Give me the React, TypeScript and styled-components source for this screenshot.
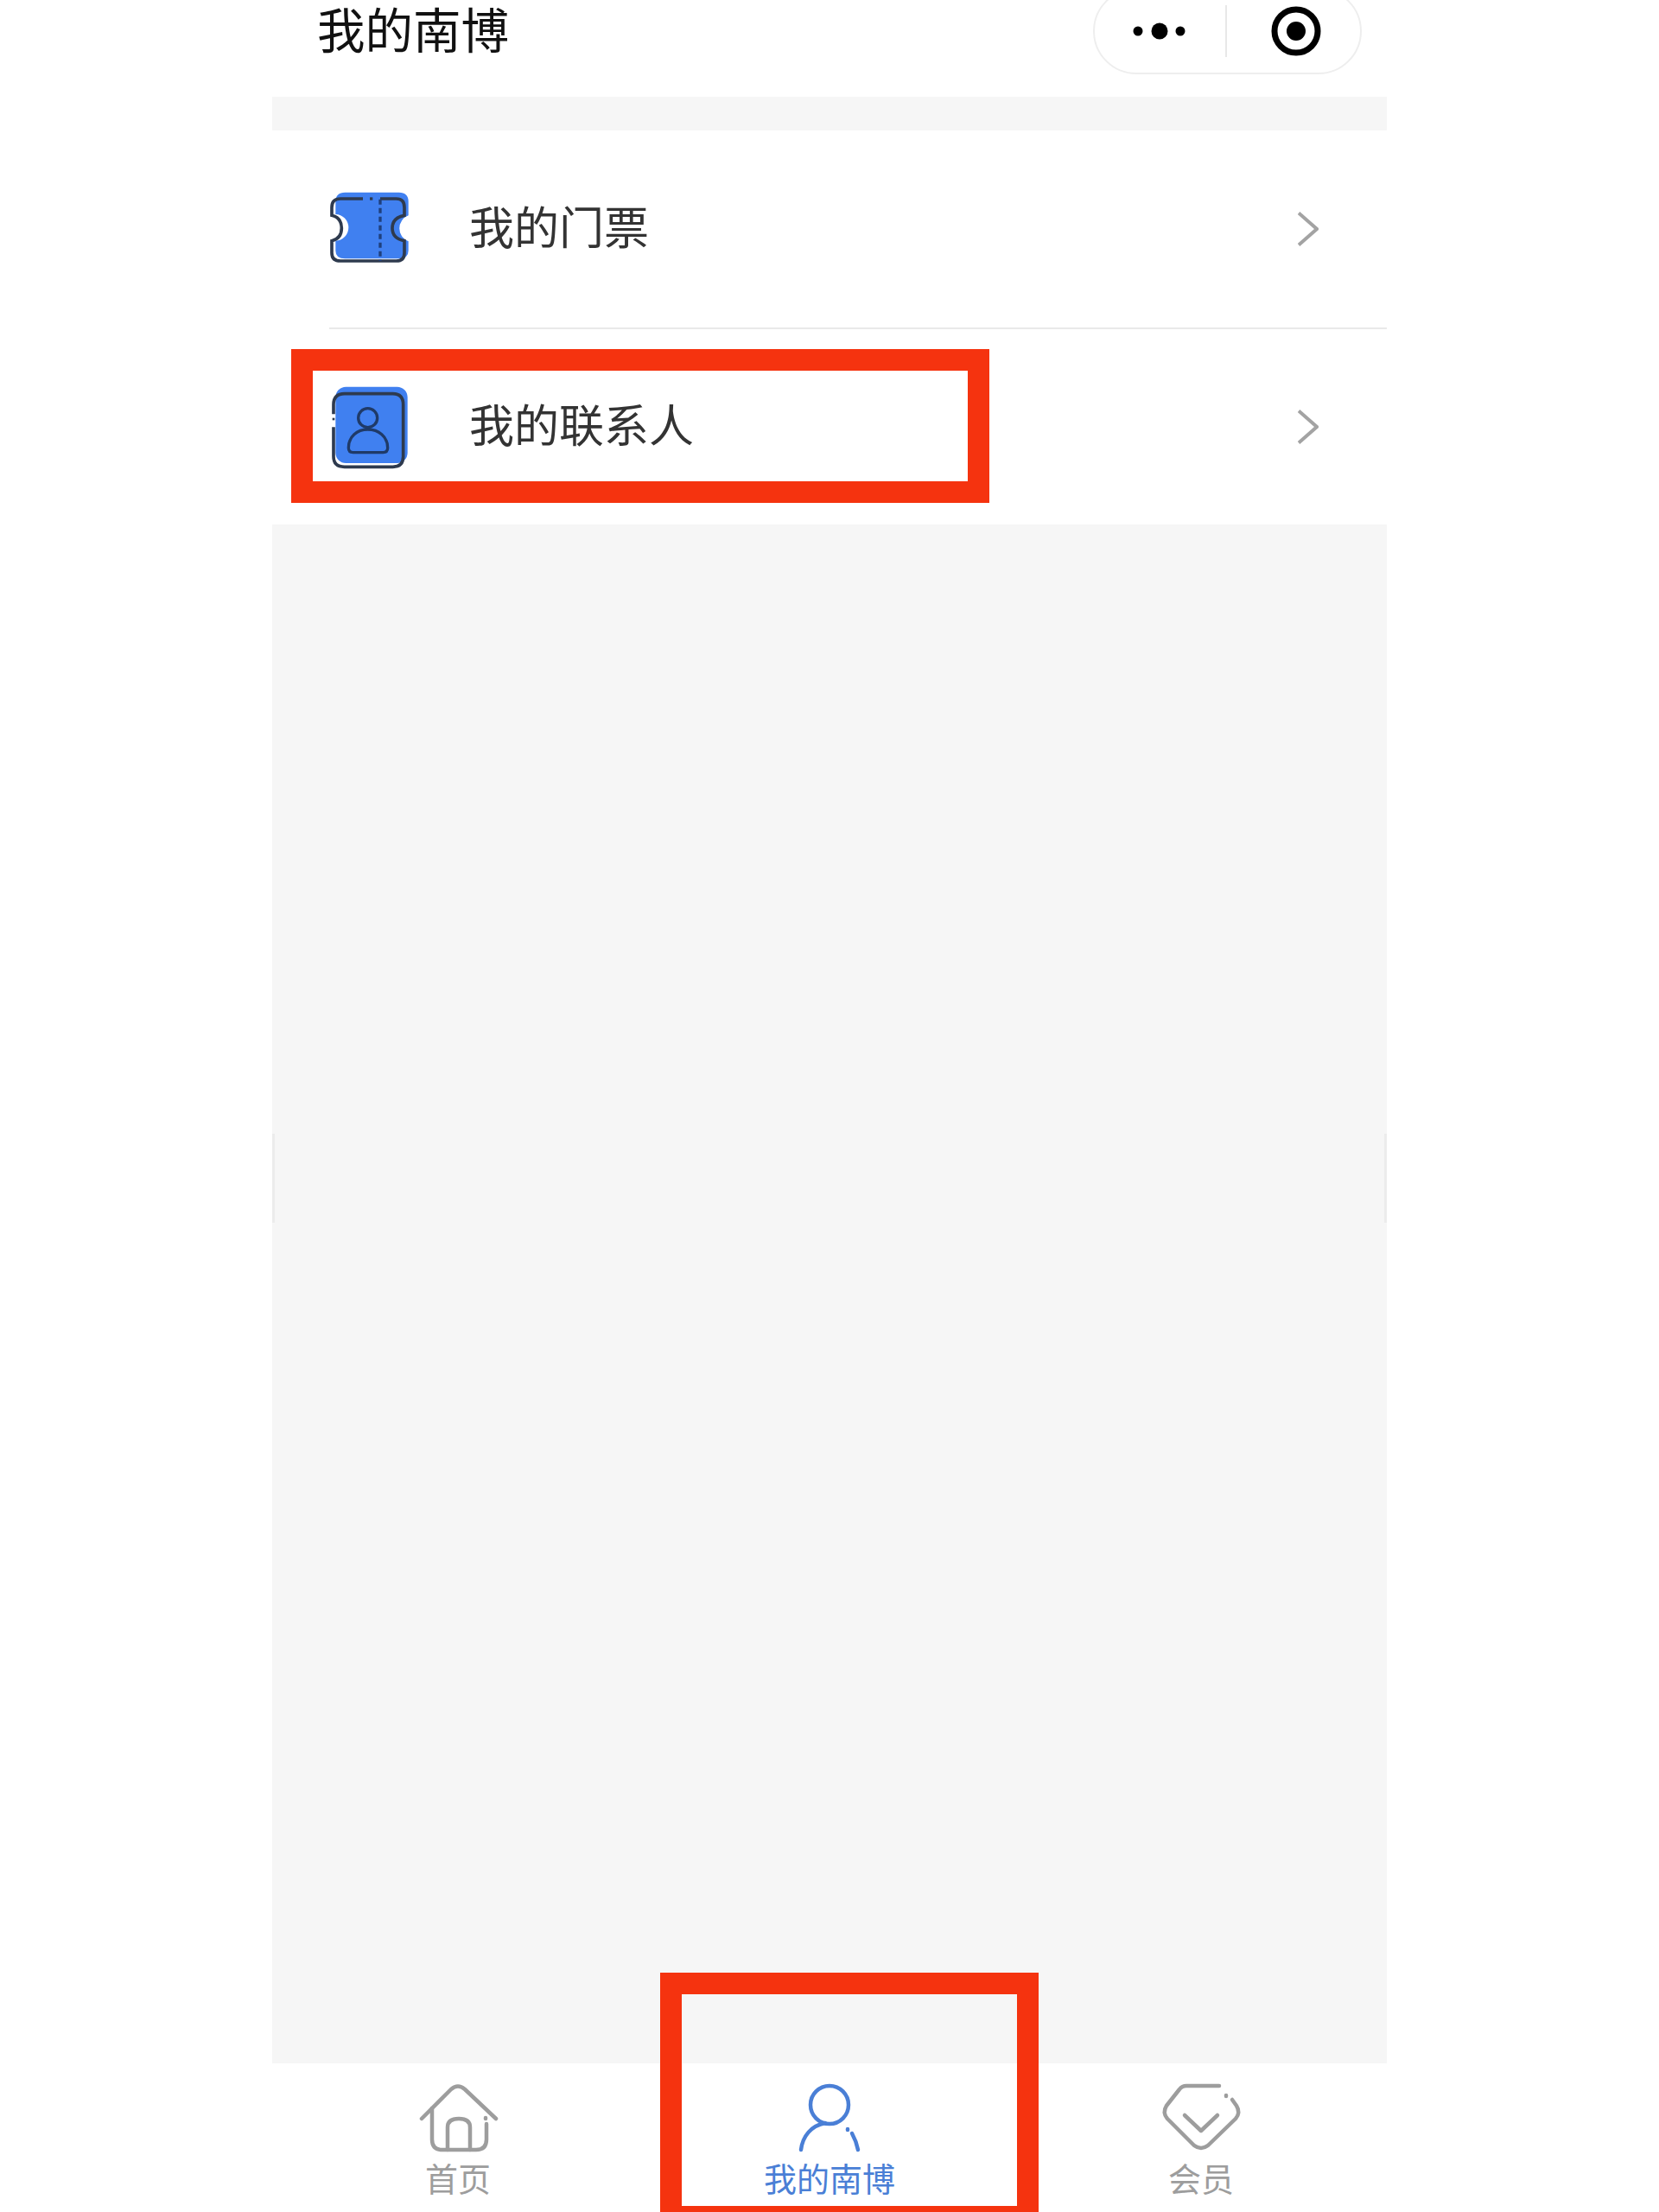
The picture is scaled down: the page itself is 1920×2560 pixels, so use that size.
import React from "react";
import styled, { createGlobalStyle } from "styled-components";

const Global = createGlobalStyle`
  html, body { margin: 0; padding: 0; background: #fff; }
  body { width: 1920px; height: 2560px; overflow: hidden; font-family: "Noto Sans CJK SC", "Noto Sans", sans-serif; }
`;

const Screen = styled.div`
  position: relative;
  width: 1920px;
  height: 2560px;
  overflow: hidden;
  background: #fff;
  display: flex;
  justify-content: center;
`;

const Phone = styled.div`
  width: 1290px;
  height: 2560px;
  display: flex;
  flex-direction: column;
`;

const NavBar = styled.header`
  height: 112px;
  flex: none;
  display: flex;
  align-items: flex-start;
  background: #fff;
`;

const Title = styled.h1`
  margin: 0 0 0 52px;
  font-size: 55.5px;
  line-height: 64px;
  font-weight: 400;
  color: #111;
`;

const Capsule = styled.div`
  margin: -14px 29px 0 auto;
  width: 311px;
  height: 100px;
  box-sizing: border-box;
  border: 2px solid #eee;
  border-radius: 50px;
  display: flex;
  align-items: center;
`;

const CapsuleSlot = styled.div<{ $shift: number }>`
  flex: 1;
  height: 60px;
  box-sizing: border-box;
  display: flex;
  align-items: center;
  justify-content: center;
  padding-left: ${(p) => Math.max(p.$shift, 0)}px;
  padding-right: ${(p) => Math.max(-p.$shift, 0)}px;
  & + & { border-left: 2px solid #e8e8e8; }
`;

const TopGap = styled.div`
  height: 39px;
  flex: none;
  background: #f6f6f6;
`;

const List = styled.section`
  flex: none;
  background: #fff;
`;

const Row = styled.div<{ $h: number }>`
  height: ${(p) => p.$h}px;
  display: flex;
  align-items: center;
  padding: 0 79px 0 45px;
`;

const RowIcon = styled.svg`
  width: 140px;
  height: 120px;
  flex: none;
`;

const RowLabel = styled.span`
  margin-left: 43px;
  padding-bottom: 8px;
  font-size: 52px;
  line-height: 70px;
  color: #333;
`;

const Chevron = styled.svg`
  margin-left: auto;
  width: 24px;
  height: 40px;
  flex: none;
`;

const Divider = styled.div`
  height: 2px;
  margin-left: 66px;
  background: #e9e9e9;
`;

const Filler = styled.main`
  flex: 1;
  background: #f6f6f6;
  display: flex;
  align-items: center;
  justify-content: space-between;
`;

const EdgeMark = styled.div`
  width: 3px;
  height: 103px;
  margin-bottom: 268px;
  background: #ececec;
`;

const TabBar = styled.nav`
  height: 172px;
  flex: none;
  background: #fff;
  display: grid;
  grid-template-columns: repeat(3, 430px);
`;

const Tab = styled.div<{ $active?: boolean }>`
  display: flex;
  flex-direction: column;
  align-items: center;
  padding-top: 22px;
  color: ${(p) => (p.$active ? "#4a7fd6" : "#9d9d9d")};
`;

const TabIcon = styled.svg`
  width: 110px;
  height: 84px;
  flex: none;
  fill: none;
  stroke: currentColor;
  stroke-width: 4.5;
  stroke-linecap: round;
  stroke-linejoin: round;
`;

const TabLabel = styled.span`
  margin-top: 3px;
  font-size: 38px;
  line-height: 46px;
`;

const RedBox = styled.div<{ $x: number; $y: number; $w: number; $h: number }>`
  position: absolute;
  left: ${(p) => p.$x}px;
  top: ${(p) => p.$y}px;
  width: ${(p) => p.$w}px;
  height: ${(p) => p.$h}px;
  box-sizing: border-box;
  border: 25px solid #f5330f;
  pointer-events: none;
`;

const ink = "#2e3a4e";
const blue = "#4080f0";

const TicketIcon = () => (
  <RowIcon viewBox="0 15 420 360">
    <path
      fill={blue}
      d="M118 68H305Q338 68 338 100V148A48 48 0 0 0 338 238V270Q338 298 305 298H118Q85 298 85 270V236A46 46 0 0 0 130 190A46 46 0 0 0 85 144V100Q85 68 118 68Z"
    />
    <path
      fill="none"
      stroke={ink}
      strokeWidth="11"
      d="M180 90H102Q72 90 72 120V148Q106 156 106 192Q106 228 72 236V278Q72 306 102 306H296Q324 306 324 278V236Q282 228 282 192Q282 156 324 148V120Q324 90 296 90H240"
    />
    <path stroke={ink} strokeWidth="10" d="M204 90H214" />
    <path stroke="#1f3f7c" strokeWidth="10" strokeDasharray="18 12" d="M240 92V306" />
  </RowIcon>
);

const ContactIcon = () => (
  <RowIcon viewBox="0 9 420 360">
    <rect x="85" y="50" width="250" height="265" rx="36" fill={blue} />
    <path
      fill="none"
      stroke={ink}
      strokeWidth="11"
      d="M78 145V112Q78 74 116 74H284Q320 74 320 112V292Q320 328 284 328H116Q78 328 78 292V190"
    />
    <path stroke={ink} strokeWidth="8" d="M78 158V166" />
    <circle cx="197" cy="158" r="33" fill="none" stroke="#1f3a68" strokeWidth="10" />
    <path
      fill="none"
      stroke="#1f3a68"
      strokeWidth="10"
      strokeLinejoin="round"
      d="M130 262C130 222 160 198 197 198C234 198 266 222 266 262Q266 278 250 278H146Q130 278 130 262Z"
    />
  </RowIcon>
);

const RowChevron = () => (
  <Chevron viewBox="0 0 24 40">
    <path d="M1 1.5L22 20L1 38.5" fill="none" stroke="#a3a3a3" strokeWidth="4" />
  </Chevron>
);

export default function App() {
  return (
    <Screen>
      <Global />
      <Phone>
        <NavBar>
          <Title>我的南博</Title>
          <Capsule>
            <CapsuleSlot $shift={-3}>
              <svg width="64" height="24" viewBox="0 0 64 24">
                <circle cx="8" cy="12" r="5.5" fill="#000" />
                <circle cx="33" cy="12" r="9.5" fill="#000" />
                <circle cx="57" cy="12" r="5.5" fill="#000" />
              </svg>
            </CapsuleSlot>
            <CapsuleSlot $shift={6}>
              <svg width="60" height="60" viewBox="0 0 60 60">
                <circle cx="30" cy="30" r="25" fill="none" stroke="#000" strokeWidth="7" />
                <circle cx="30" cy="30" r="11" fill="#000" />
              </svg>
            </CapsuleSlot>
          </Capsule>
        </NavBar>
        <TopGap />
        <List>
          <Row $h={228}>
            <TicketIcon />
            <RowLabel>我的门票</RowLabel>
            <RowChevron />
          </Row>
          <Divider />
          <Row $h={226}>
            <ContactIcon />
            <RowLabel>我的联系人</RowLabel>
            <RowChevron />
          </Row>
        </List>
        <Filler>
          <EdgeMark />
          <EdgeMark />
        </Filler>
        <TabBar>
          <Tab>
            <TabIcon viewBox="0 0 110 84">
              <path d="M13 42L47 8Q55 1 63 8L99 42" />
              <path d="M25 30V66Q25 78 37 78H76Q88 78 88 66V48" />
              <path d="M87 41V42" />
              <path d="M43 78V52Q43 42 56 42Q69 42 69 52V78" />
            </TabIcon>
            <TabLabel>首页</TabLabel>
          </Tab>
          <Tab $active>
            <TabIcon viewBox="0 0 110 84">
              <circle cx="55" cy="26" r="22" />
              <path d="M22 78C24 62 34 50 50 47" />
              <path d="M76 54V55" />
              <path d="M81 59Q86 68 88 78" />
            </TabIcon>
            <TabLabel>我的南博</TabLabel>
          </Tab>
          <Tab>
            <TabIcon viewBox="0 0 110 84">
              <path d="M76 4H38Q33 4 30 8L15 27Q10 35 16 42L47 73Q55 79 63 73L95 42Q101 35 96 27L91 20" />
              <path d="M84 15V16" />
              <path d="M36 38L55 56L74 38" />
            </TabIcon>
            <TabLabel>会员</TabLabel>
          </Tab>
        </TabBar>
      </Phone>
      <RedBox $x={337} $y={404} $w={808} $h={178} />
      <RedBox $x={764} $y={2283} $w={438} $h={295} />
    </Screen>
  );
}
